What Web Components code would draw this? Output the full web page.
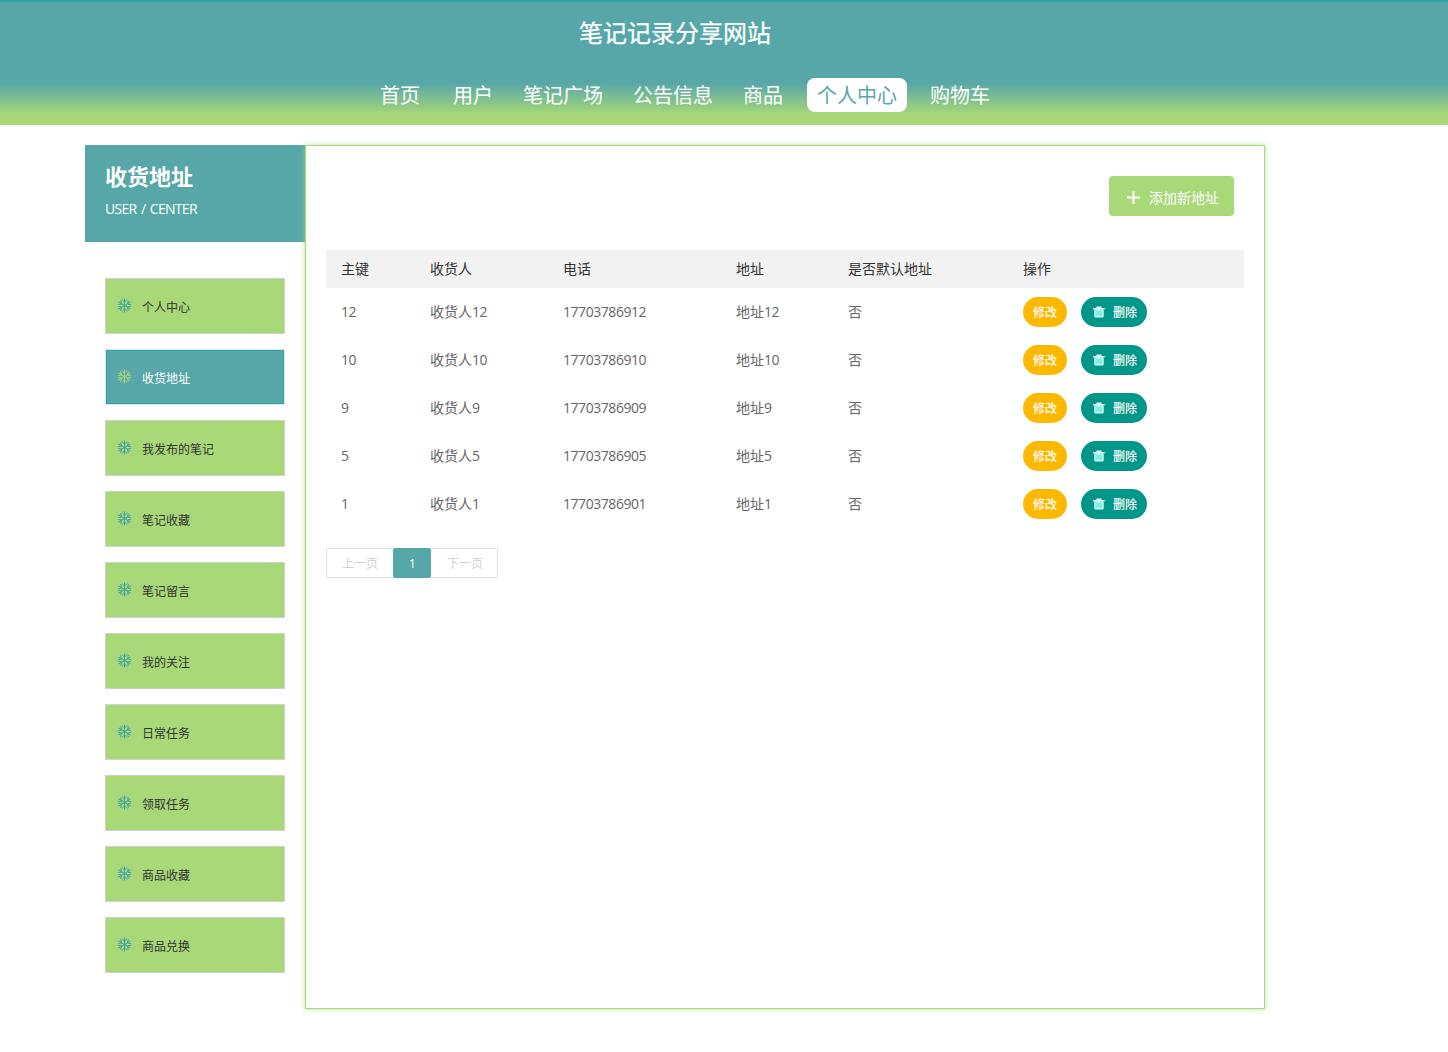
<!DOCTYPE html>
<html lang="zh-CN">
<head>
<meta charset="utf-8">
<title>收货地址</title>
<style>
  html, body { margin: 0; padding: 0; background: #fff; }
  body { font-family: "Open Sans", "Noto Sans CJK SC", sans-serif; font-size: 14px; color: #333; }
</style>
</head>
<body>
<site-header></site-header>
<page-layout>
  <side-panel slot="side" title="收货地址" sub="USER / CENTER">
    <side-item>个人中心</side-item>
    <side-item active>收货地址</side-item>
    <side-item>我发布的笔记</side-item>
    <side-item>笔记收藏</side-item>
    <side-item>笔记留言</side-item>
    <side-item>我的关注</side-item>
    <side-item>日常任务</side-item>
    <side-item>领取任务</side-item>
    <side-item>商品收藏</side-item>
    <side-item>商品兑换</side-item>
  </side-panel>
  <address-list></address-list>
</page-layout>

<script>
const FONT = '"Open Sans", "Noto Sans CJK SC", sans-serif';
const TEAL = '#58a7a8';
const GREEN = '#a8d878';

// Base: every element just sets its shadow html once
class BaseEl extends HTMLElement {
  constructor() {
    super();
    this.attachShadow({ mode: "open" });
  }
  connectedCallback() {
    const t = document.createElement("template");
    t.innerHTML = this.html();
    this.shadowRoot.appendChild(t.content.cloneNode(true));
  }
}

class SiteHeader extends BaseEl {
  html() {
    const links = [
      ["首页", 0], ["用户", 13], ["笔记广场", 10], ["公告信息", 10],
      ["商品", 10], ["个人中心", 14, true], ["购物车", 13]
    ];
    const nav = links.map(([txt, ml, on]) =>
      `<a class="${on ? "on" : ""}" style="margin-left:${ml}px">${txt}</a>`).join("");
    return `
    <style>
      :host { display: block; height: 125px; box-sizing: border-box; border-top: 2px solid #2aa5a5;
        background: linear-gradient(to bottom, ${TEAL} 0, ${TEAL} 81px, ${GREEN} 113px, ${GREEN} 100%);
        font-family: ${FONT}; color: #fff; }
      h1 { margin: 0; padding: 13px 98px 0 0; height: 63px; box-sizing: border-box; text-align: center;
        font-size: 24px; line-height: 36px; font-weight: 400; -webkit-text-stroke: .25px #fff; }
      nav { display: flex; padding: 13px 0 0 370px; }
      a { display: block; box-sizing: border-box; height: 34px; line-height: 36px; padding: 0 10px;
        font-size: 20px; border-radius: 8px; white-space: nowrap; }
      a.on { background: #fff; color: ${TEAL}; }
    </style>
    <h1>笔记记录分享网站</h1>
    <nav>${nav}</nav>`;
  }
}

class PageLayout extends BaseEl {
  html() {
    return `
    <style>
      :host { display: flex; width: 1180px; margin: 20px 0 43px 85px; align-items: stretch; }
      .side { width: 220px; flex: none; }
      .main { flex: 1; min-width: 0; }
    </style>
    <div class="side"><slot name="side"></slot></div>
    <div class="main"><slot></slot></div>`;
  }
}

class SidePanel extends BaseEl {
  html() {
    return `
    <style>
      :host { display: block; font-family: ${FONT}; }
      header { height: 97px; box-sizing: border-box; background: ${TEAL}; color: #fff; padding: 15px 20px 0; }
      h2 { margin: 0; font-size: 22px; line-height: 32px; font-weight: 700; }
      p { margin: 7px 0 0; font-size: 14px; line-height: 20px; letter-spacing: -.7px; word-spacing: 1.5px; }
      .menu { display: flex; flex-direction: column; gap: 15px; padding: 36px 20px 0; }
    </style>
    <header><h2>${this.getAttribute("title")}</h2><p>${this.getAttribute("sub")}</p></header>
    <div class="menu"><slot></slot></div>`;
  }
}

class SideItem extends BaseEl {
  html() {
    const on = this.hasAttribute("active");
    const arm = `<path d="M12 2v20M8.200 3.500 12 7.300l3.800-3.800M8.200 20.500 12 16.700l3.800 3.800"/>`;
    return `
    <style>
      :host { display: block; height: 56px; box-sizing: border-box; border: 1px solid ${on ? "#e4e4e4" : "#cfd3c9"};
        background: ${on ? TEAL : GREEN}; color: ${on ? "#fff" : "#333"}; font-size: 12px; }
      .in { display: flex; align-items: center; height: 100%; padding: 0 0 0 10px; box-sizing: border-box;
        ${on ? "border: 1px solid #2aa5a5; padding-left: 9px;" : ""} }
      svg { width: 17px; height: 17px; flex: none; margin-right: 9px; fill: none;
        stroke: ${on ? GREEN : "#3a9fa8"}; stroke-width: 1.300; position: relative; top: -1px; }
      span { position: relative; top: 1px; }
    </style>
    <div class="in">
      <svg viewBox="0 0 24 24">${arm}<g transform="rotate(60 12 12)">${arm}</g><g transform="rotate(120 12 12)">${arm}</g></svg>
      <span><slot></slot></span>
    </div>`;
  }
}

class PillBtn extends BaseEl {
  html() {
    const del = this.getAttribute("kind") === "del";
    return `
    <style>
      :host { display: inline-flex; align-items: center; height: 30px; box-sizing: border-box;
        border-radius: 15px; padding: 0 10px 0 ${del ? 12 : 10}px; font-size: 12px; color: #fff; vertical-align: top;
        background: ${del ? "#009688" : "#ffb800"}; font-weight: 500; }
      svg { width: 12px; height: 12px; margin-right: 8px; flex: none; }
    </style>
    ${del ? `<svg viewBox="0 0 12 12"><path fill="#e8fffb" d="M0 2h12v1.300H0zM3.500 .6h5v1.400h-5z"/><path fill="#e8fffb" d="M1.300 3.300h9.400v6.700a1.500 1.500 0 0 1-1.500 1.500H2.800a1.500 1.500 0 0 1-1.500-1.500z"/><path fill="#7ff0e6" d="M2.400 4.400h7.200v5.700H2.400z"/></svg>` : ""}
    <slot></slot>`;
  }
}

class PageBar extends BaseEl {
  html() {
    return `
    <style>
      :host { display: inline-flex; height: 30px; font-size: 12px; color: #d2d2d2; }
      div { box-sizing: border-box; height: 30px; line-height: 30px; text-align: center; border: 1px solid #e2e2e2; background: #fff; }
      .prev { width: 67px; border-radius: 2px 0 0 2px; border-right: 0; }
      .cur { width: 38px; background: ${TEAL}; border-color: ${TEAL}; color: #fff; border-radius: 2px; padding-left: 1px; }
      .next { width: 67px; border-left: 0; border-radius: 0 2px 2px 0; padding-left: 2px; }
    </style>
    <div class="prev">上一页</div><div class="cur">1</div><div class="next">下一页</div>`;
  }
}

class AddressList extends BaseEl {
  html() {
    const n = s => s.replace(/\d+/g, d => `<span class="n">${d}</span>`);
    const rows = [12, 10, 9, 5, 1].map(id => {
      const tail = String(id).padStart(2, "0");
      return `<div class="tr">
        <div class="up">${n(String(id))}</div><div class="up">${n("收货人" + id)}</div><div class="up">${n("177037869" + tail)}</div>
        <div class="up">${n("地址" + id)}</div><div class="up">否</div>
        <div class="ops"><pill-btn>修改</pill-btn><pill-btn kind="del">删除</pill-btn></div>
      </div>`;
    }).join("");
    return `
    <style>
      :host { display: block; box-sizing: border-box; height: 864px; border: 1px solid ${GREEN};
        box-shadow: 0 0 5px rgba(168,216,120,.8); background: #fff; padding: 30px 20px 0; font-family: ${FONT}; position: relative; }
      .top { display: flex; justify-content: flex-end; padding-right: 10px; height: 74px; }
      .add { display: flex; align-items: center; justify-content: center; gap: 8px; width: 125px; height: 40px;
        box-sizing: border-box; padding: 2px 0 0 2px; border-radius: 4px; background: ${GREEN}; color: #fff; font-size: 14px; }
      .add svg { width: 15px; height: 15px; }
      .tr, .th { display: grid; grid-template-columns: 89px 133px 173px 112px 175px 1fr; padding: 0; align-items: center; }
      .th { height: 38px; background: #f2f2f2; color: #333; }
      .tr { height: 48px; color: #666; }
      .tr > div, .th > div { padding-left: 15px; }
      .th > div, .up { padding-bottom: 2px; }
      .n { letter-spacing: -.45px; }
      .ops { display: flex; gap: 14px; }
      .pager { margin-top: 20px; }
    </style>
    <div class="top"><div class="add">
      <svg viewBox="0 0 15 15"><path fill="#fff" d="M6.500 1h2v5.500H14v2H8.500V14h-2V8.500H1v-2h5.500z"/></svg>添加新地址
    </div></div>
    <div class="th"><div>主键</div><div>收货人</div><div>电话</div><div>地址</div><div>是否默认地址</div><div>操作</div></div>
    ${rows}
    <div class="pager"><page-bar></page-bar></div>`;
  }
}

customElements.define("site-header", SiteHeader);
customElements.define("page-layout", PageLayout);
customElements.define("side-panel", SidePanel);
customElements.define("side-item", SideItem);
customElements.define("pill-btn", PillBtn);
customElements.define("page-bar", PageBar);
customElements.define("address-list", AddressList);
</script>
</body>
</html>
